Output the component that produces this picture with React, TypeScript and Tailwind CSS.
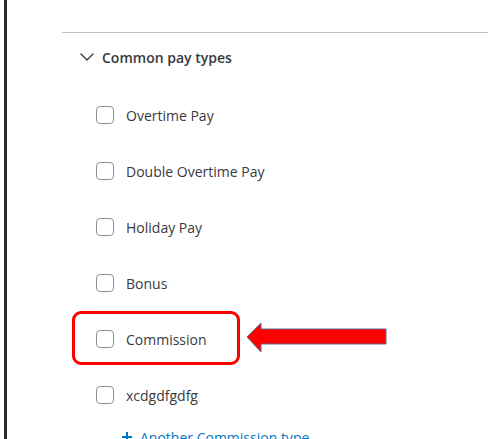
import { ChevronDown } from "lucide-react";

const payTypes = [
  "Overtime Pay",
  "Double Overtime Pay",
  "Holiday Pay",
  "Bonus",
  "Commission",
  "xcdgdfgdfg",
];

function PayRow({ label }: { label: string }) {
  return (
    <div className="flex h-[56px] items-center gap-3 pl-[34px]">
      <span className="h-[18px] w-[18px] shrink-0 rounded-[4px] border border-[#8d9096] bg-white" />
      <span className="text-[14px] text-[#393a3d]">{label}</span>
    </div>
  );
}

export default function App() {
  return (
    <div
      className="relative flex h-[439px] w-[488px] overflow-hidden bg-white"
      style={{ fontFamily: '"Open Sans", "Liberation Sans", sans-serif' }}
    >
      {/* left edge of the drawer */}
      <div className="w-1 shrink-0" />
      <div className="w-[3px] shrink-0 bg-[#2b2b2b]" />

      <div className="flex-1 pl-[55px]">
        <div className="h-8" />
        <div className="border-t border-[#c1c2c8]">
          <div className="mt-[14px] flex h-5 items-center gap-[3px] pl-[13px]">
            <ChevronDown size={24} strokeWidth={1.4} className="text-[#393a3d]" />
            <span className="text-[14px] font-semibold text-[#393a3d]">
              Common pay types
            </span>
          </div>

          <div className="mt-[20px]">
            {payTypes.map((p) => (
              <PayRow key={p} label={p} />
            ))}
            <div className="flex h-7 items-center gap-2 pl-[60px] text-[14px] text-[#0077c5]">
              <svg width="10" height="10" viewBox="0 0 10 10">
                <path d="M5 0v10M0 5h10" stroke="#0077c5" strokeWidth="2" />
              </svg>
              Another Commission type
            </div>
          </div>
        </div>
      </div>

      {/* annotation: highlight box */}
      <div className="absolute left-[72px] top-[311px] h-[54px] w-[168px] rounded-[9px] border-[3px] border-[#ff0000]" />

      {/* annotation: arrow */}
      <svg
        className="absolute left-[246px] top-[321px]"
        width="142"
        height="33"
        viewBox="0 0 142 33"
      >
        <polygon
          points="1,16 15,2 15,8 140,8 140,23 15,23 15,31"
          fill="#ff0000"
          stroke="#5a6f94"
          strokeWidth="1"
        />
      </svg>
    </div>
  );
}
